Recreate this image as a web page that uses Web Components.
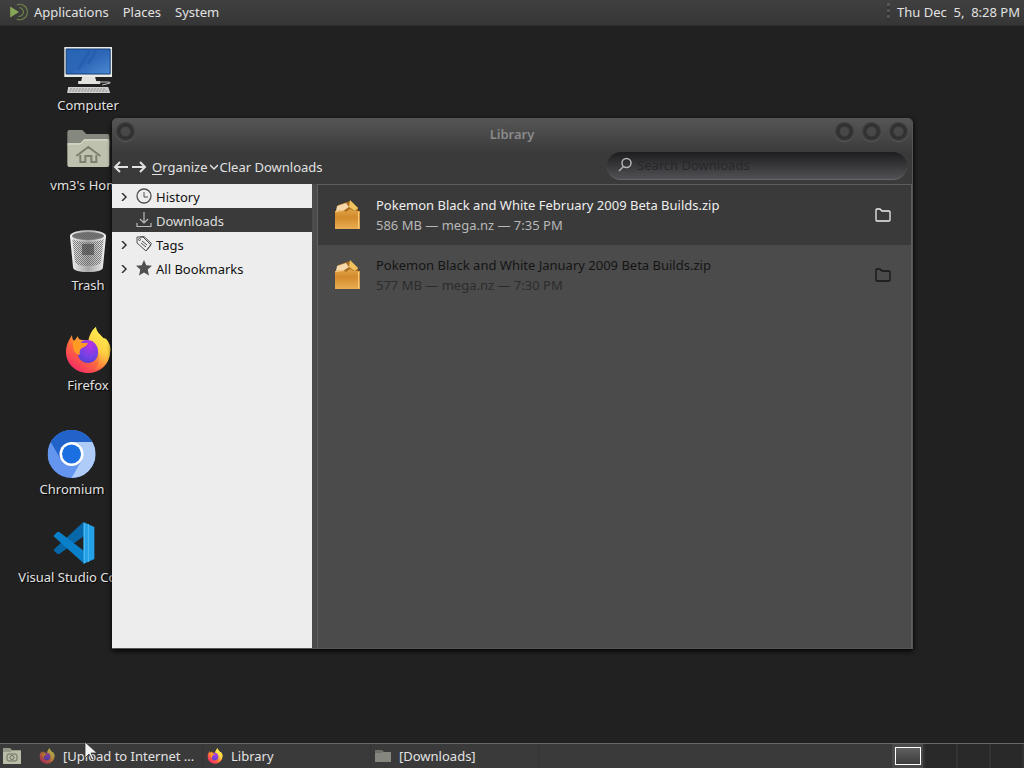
<!DOCTYPE html>
<html lang="en">
<head>
<meta charset="utf-8">
<title>Desktop</title>
<style>
  html, body { height: 100%; margin: 0; }
  body { overflow: hidden; background: #212121; color: #e2e2e2; font: 13px/18px "Noto Sans", "Open Sans", sans-serif; }
</style>
</head>
<body>
<mate-desktop></mate-desktop>

<script>
const ICONS = {
  mate: `<svg viewBox="0 0 20 20"><path d="M2 5l8 5-8 5z" fill="#87a556"/><path d="M8 3.500a7 7 0 1 1 0 13M10.500 6a4 4 0 1 1-1 8" fill="none" stroke="#6b7f4c" stroke-width="1.100"/></svg>`,
  computer: `<svg viewBox="0 0 48 48"><defs><linearGradient id="s" x1="0" y1="0" x2="1" y2="1"><stop offset="0" stop-color="#2565b4"/><stop offset=".5" stop-color="#2d66b6"/><stop offset="1" stop-color="#4b8ad2"/></linearGradient></defs>
    <path d="M0 1h48v30H0z" fill="#e8ebe6"/><path d="M2 3h44v25H2z" fill="url(#s)" stroke="#173d78"/><path d="M32 4L24 18M26 4L14 24" stroke="#1e50a0" stroke-width="3" opacity=".35"/><path d="M18 31h13l1 4h4v3H14v-3h3z" fill="#e2e3de"/><path d="M33 36h10q4 0 3 1l-8 2" stroke="#c7c8c5" fill="none"/><path d="M4 41h40l2 6H3z" fill="#d1d2cf"/><path d="M6 43h36M5 45h38" stroke="#888" stroke-dasharray="2 1"/></svg>`,
  home: `<svg viewBox="0 0 48 48"><path d="M3 4q0-2 2-2h13l4 4h21q2 0 2 2v10H3z" fill="#85887e" transform="translate(0 2)"/><path d="M3 17h13l4-4h23q2 0 2 2v24q0 2-2 2H5q-2 0-2-2z" fill="#bdc1ad"/><path d="M4 18h12l4-4h24" fill="none" stroke="#dde0d0"/><path d="M12 30l12-9 12 9M16 29v7h5v-6h6v6h5v-7" fill="none" stroke="#7c806c" stroke-width="2"/></svg>`,
  trash: `<svg viewBox="0 0 48 48"><defs><pattern id="m" width="2" height="2" patternUnits="userSpaceOnUse"><path d="M0 0h1v1H0zM1 1h1v1H1z" fill="#666"/></pattern><linearGradient id="t"><stop offset="0" stop-color="#f4f4f4"/><stop offset=".5" stop-color="#a6a6a6"/><stop offset="1" stop-color="#f4f4f4"/></linearGradient></defs>
    <path d="M6 10l3 31q0 5 15 5t15-5l3-31z" fill="url(#t)"/><path d="M8 11l3 25q1 4 13 4t13-4l3-25z" fill="url(#m)" opacity=".8"/><path d="M18 18h12v11H18z" fill="#333" opacity=".5"/><ellipse cx="24" cy="10" rx="18" ry="6" fill="url(#t)"/><ellipse cx="24" cy="10" rx="16" ry="4" fill="#777"/><path d="M9 9q15-5 30 0-15 8-30 0z" fill="url(#m)"/></svg>`,
  firefox: `<svg viewBox="0 0 48 48"><defs><linearGradient id="f" x1=".85" y1=".1" x2=".2" y2="1"><stop offset="0" stop-color="#fff14a"/><stop offset=".3" stop-color="#ffbd35"/><stop offset=".6" stop-color="#ff6a3c"/><stop offset="1" stop-color="#f0246c"/></linearGradient><linearGradient id="y" x1=".6" y1="0" x2=".3" y2="1"><stop offset="0" stop-color="#fff150"/><stop offset=".5" stop-color="#ffd244"/><stop offset="1" stop-color="#ff8a3c" stop-opacity=".2"/></linearGradient><radialGradient id="p" cx=".6" cy=".2" r=".9"><stop offset="0" stop-color="#b833e1"/><stop offset=".6" stop-color="#7542e5"/><stop offset="1" stop-color="#4d3ed2"/></radialGradient></defs>
    <path d="M8 9c0 3 1 5 2 6l4-5c0 3 2 4 5 4 2 0 4 0 6 1 1-7 4-12 7-14 0 5 4 7 7 11l3 1c4 5 5 9 4 14-1 12-10 20-22 20S2 38 2 26c0-7 3-12 6-17z" fill="url(#f)"/><path d="M24 17c1-8 4-13 8-16 0 5 4 7 7 11l3 1c4 5 5 9 4 14-1 10-8 16-16 17 5-4 6-12 4-18-2-5-5-7-10-9z" fill="url(#y)"/><path d="M17 16c6-4 15-2 17 8 1 8-4 13-10 13S13 32 14 26z" fill="url(#p)"/><path d="M9 15c4-1 7 0 9 2h6c-1 3-4 4-6 5-2 1-3 4-2 7-5-1-8-6-7-14z" fill="#ff9a23"/></svg>`,
  chromium: `<svg viewBox="0 0 48 48"><circle cx="24" cy="24" r="24" fill="#6596ef"/><path d="M3.200 12A24 24 0 0 1 44.800 12H24L13.600 30z" fill="#2263c9"/><path d="M44.800 12A24 24 0 0 1 24 48L34.400 30 24 12z" fill="#afccf9"/><circle cx="24" cy="24" r="12" fill="#fff"/><circle cx="24" cy="24" r="9.500" fill="#1b6fe0"/></svg>`,
  vscode: `<svg viewBox="0 0 48 48"><path d="M32 4L2 32l4 4h2l26-19z" fill="#0867a9"/><path d="M2 18l4-4h2l26 20-2 11z" fill="#0b80ca"/><path d="M32 4l11 5v32l-11 5z" fill="#22a0e8"/><path d="M33 5v40M37 6v38" stroke="#55baf0"/></svg>`,
  history: `<svg viewBox="0 0 16 16" fill="none" stroke="currentColor"><circle cx="8" cy="8" r="7" stroke-width="1.300"/><path d="M8 4v5h4"/></svg>`,
  download: `<svg viewBox="0 0 16 16" fill="none" stroke="currentColor" stroke-width="1.200"><path d="M8 0v10M4 7l4 4 4-4M1 11v3.500h14V11"/></svg>`,
  tags: `<svg viewBox="0 0 16 16" fill="none" stroke="currentColor"><path d="M1 1h6l8 8-5 6-9-8z"/><path d="M4 1l4-.5 7.500 7L11 14" /><circle cx="3.500" cy="3.500" r="1"/><path d="M6 5l5 4M5 7l5 4"/></svg>`,
  star: `<svg viewBox="0 0 16 16"><path d="M8 0l2.300 5.200 5.700.6-4.300 3.800 1.300 5.900L8 12.500l-5 3 1.300-5.900L0 5.800l5.700-.6z" fill="currentColor"/></svg>`,
  back: `<svg viewBox="0 0 16 16" fill="none" stroke="currentColor" stroke-width="2"><path d="M15 8H2M7 3L2 8l5 5"/></svg>`,
  forward: `<svg viewBox="0 0 16 16" fill="none" stroke="currentColor" stroke-width="2"><path d="M1 8h13M9 3l5 5-5 5"/></svg>`,
  down: `<svg viewBox="0 0 8 8" fill="none" stroke="currentColor" stroke-width="1.500"><path d="M0 2l4 4 4-4"/></svg>`,
  right: `<svg viewBox="0 0 8 8" fill="none" stroke="currentColor" stroke-width="1.500"><path d="M2 0l4 4-4 4"/></svg>`,
  search: `<svg viewBox="0 0 16 16" fill="none" stroke="currentColor" stroke-width="1.500"><circle cx="9.500" cy="6" r="4.500"/><path d="M6.500 9.500L2 14"/></svg>`,
  folder: `<svg viewBox="0 0 16 16" fill="none" stroke="currentColor" stroke-width="1.300"><path d="M1 13V3q0-1 1-1h3l2 2h7q1 0 1 1v8q0 1-1 1H2q-1 0-1-1z"/></svg>`,
  zip: `<svg viewBox="0 0 32 32"><defs><linearGradient id="z" x1="0" y1="0" x2="0" y2="1"><stop offset="0" stop-color="#e2a54a"/><stop offset=".4" stop-color="#d28a2c"/><stop offset="1" stop-color="#e9ae52"/></linearGradient></defs><path d="M6 6l12-4 8 7v5H5z" fill="#a96c20"/><path d="M5 7l9-3 3 4-6 4H4z" fill="#f6d7aa"/><path d="M18 1l8 8-3 3-6-4z" fill="#efc35d"/><path d="M3 12l8-1 3 2 4-3 4 2h6v18H3z" fill="url(#z)"/><path d="M3.500 12.500l8-1M26.500 13v16" stroke="#f8cd83"/></svg>`,
  smallfolder: `<svg viewBox="0 0 16 16"><path d="M0 2h7l2 2h7v10H0z" fill="#6f706a"/><path d="M0 5h6l2-1h8v10H0z" fill="#85867e"/></svg>`,
  files: `<svg viewBox="0 0 20 20"><path d="M1 2h7l2 2h9v4H1z" fill="#969987"/><path d="M1 6h7l2-1h9v13H1z" fill="#b9bda7"/><rect x="5" y="8" width="10" height="7" rx="2" fill="none" stroke="#6b6f5d"/><circle cx="10" cy="11.500" r="2" fill="none" stroke="#6b6f5d"/></svg>`,
  cursor: `<svg viewBox="0 0 14 20"><path d="M2 1v16l4-4 3 6 2-1-3-6h6z" fill="#f4f4f4" stroke="#333" stroke-width=".8"/></svg>`
};

function define(name, html, setup) {
  const template = document.createElement("template");
  template.innerHTML = html;
  customElements.define(name, class extends HTMLElement {
    constructor() {
      super();
      this.attachShadow({ mode: "open" }).append(template.content.cloneNode(true));
    }
    connectedCallback() { if (setup) setup(this, this.shadowRoot); }
  });
}

const RESET = `* { box-sizing: border-box; }
  button { font: inherit; color: inherit; background: none; border: 0; padding: 0; margin: 0; text-align: left; white-space: nowrap; }`;

define("app-icon", `<style>
  :host { display: block; flex: none; width: var(--size, 16px); height: var(--size, 16px); }
  span { display: contents; }
  svg { display: block; width: 100%; height: 100%; }
</style><span></span>`, (el, root) => { root.querySelector("span").innerHTML = ICONS[el.getAttribute("name")]; });

define("top-panel", `<style>${RESET}
  :host { display: flex; align-items: center; height: 26px; padding: 0 4px 2px 8px; background: linear-gradient(#404040, #363636); border-bottom: 1px solid #2a2a2a; box-sizing: border-box; }
  nav { display: flex; align-items: center; gap: 14px; flex: 1; }
  nav button:first-child { display: flex; align-items: center; gap: 4px; }
  app-icon { --size: 22px; }
  .grip { width: 3px; height: 18px; margin-right: 7px; background: repeating-linear-gradient(#555 0 3px, #333 3px 6px); }
</style>
<nav><button><app-icon name="mate"></app-icon>Applications</button><button>Places</button><button>System</button></nav>
<span class="grip"></span><button>Thu Dec&nbsp; 5,&nbsp; 8:28 PM</button>`);

define("desktop-icon", `<style>${RESET}
  :host { display: block; position: absolute; left: var(--x); top: var(--y); transform: translateX(-50%); }
  button { display: flex; flex-direction: column; align-items: center; gap: 2px; text-shadow: 1px 1px 1px #000; }
  app-icon { --size: 48px; }
</style>
<button><slot></slot></button>`, (el, root) => {
  const icon = document.createElement("app-icon");
  icon.setAttribute("name", el.getAttribute("icon"));
  root.querySelector("button").prepend(icon);
});

define("tree-item", `<style>${RESET}
  :host { display: block; color: #111; }
  :host([selected]) { background: #3a3a3a; color: #ddd; }
  button { display: flex; align-items: center; width: 100%; height: 24px; padding: 2px 8px 0; }
  .twist { --size: 8px; margin-right: 8px; color: #333; }
  :host([leaf]) .twist { visibility: hidden; }
  .kind { display: block; margin: -3px 4px 0 0; color: #505050; }
  :host([selected]) .kind { color: #bbb; }
</style>
<button><app-icon class="twist" name="right"></app-icon><slot name="icon" class="kind"></slot><slot></slot></button>`);

define("download-item", `<style>${RESET}
  :host { display: flex; align-items: center; height: 60px; padding: 0 20px 0 14px; box-sizing: border-box; color: #151515; }
  :host([selected]) { background: #3a3a3a; color: #eee; }
  .zip { --size: 32px; }
  .text { flex: 1; min-width: 0; margin-left: 12px; line-height: 20px; white-space: nowrap; }
  .meta { color: #2c2c2c; }
  :host([selected]) .meta { color: #b8b8b8; }
</style>
<app-icon class="zip" name="zip"></app-icon>
<div class="text"><div><slot></slot></div><div class="meta"><slot name="meta"></slot></div></div>
<button aria-label="Open containing folder"><app-icon name="folder"></app-icon></button>`);

define("window-button", `<style>
  :host { display: block; width: 19px; height: 19px; }
  button { display: block; box-sizing: border-box; width: 19px; height: 19px; padding: 0; border: 0; border-radius: 50%; background: radial-gradient(circle, #484848 4px, #2e2e2e 6px, #363636 8px, #444 10px); box-shadow: 0 1px 1px #5c5c5c; }
</style><button></button>`, (el, root) => root.querySelector("button").setAttribute("aria-label", el.getAttribute("label")));

define("library-window", `<style>${RESET}
  :host { display: flex; flex-direction: column; box-sizing: border-box; border: 1px solid #555; border-left: 0; border-radius: 5px 5px 0 0; background: #4b4b4b; box-shadow: 0 2px 5px #000; overflow: hidden; }
  header { background: linear-gradient(#555, #3a3a3a 34px); flex: none; }
  .title { display: grid; grid-template-columns: 1fr auto 1fr; align-items: center; height: 30px; padding: 0 4px; }
  h1 { margin: 0; font: 600 13px/18px "Noto Sans", sans-serif; color: #8a8a8a; }
  .controls { display: flex; gap: 8px; justify-self: end; }
  .title window-button { margin-top: -5px; }
  .tools { display: flex; align-items: center; height: 35px; padding: 0 5px 0 1px; }
  .tools button { display: flex; align-items: center; gap: 2px; }
  .tools .nav { margin-right: 2px; }
  .clear { margin-left: 2px; }
  u { text-underline-offset: 2px; }
  .menu { margin-left: 3px; }
  .menu app-icon { --size: 8px; }
  .search { display: flex; align-items: center; gap: 4px; width: 300px; height: 28px; margin: -2px 0 0 auto; padding: 0 10px; border-radius: 14px; background: linear-gradient(#1d1d1f, #515155); border-bottom: 1px solid #666; color: #b5b5b5; }
  input { flex: 1; min-width: 0; padding: 0; border: 0; outline: 0; background: none; font: inherit; color: #ddd; }
  input::placeholder { color: #27272b; opacity: 1; }
  .body { display: flex; flex: 1; min-height: 0; }
  aside { width: 200px; background: #ededed; }
  main { flex: 1; min-width: 0; margin-left: 5px; border: 1px solid #5e5e5e; border-width: 1px 1px 0; }
</style>
<header>
  <div class="title"><window-button label="Window menu"></window-button><h1>Library</h1>
    <div class="controls"><window-button label="Minimize"></window-button><window-button label="Maximize"></window-button><window-button label="Close"></window-button></div></div>
  <div class="tools">
    <button class="nav" aria-label="Back"><app-icon name="back"></app-icon></button>
    <button class="nav" aria-label="Forward"><app-icon name="forward"></app-icon></button>
    <button class="menu"><span><u>O</u>rganize</span><app-icon name="down"></app-icon></button>
    <button class="clear">Clear Downloads</button>
    <label class="search"><app-icon name="search"></app-icon><input type="text" placeholder="Search Downloads" aria-label="Search Downloads"></label>
  </div>
</header>
<div class="body"><aside><slot name="tree"></slot></aside><main><slot></slot></main></div>`);

define("task-button", `<style>${RESET}
  :host { display: block; flex: 0 0 168px; height: 24px; border-right: 1px solid #353535; box-sizing: border-box; }
  button { display: flex; align-items: center; gap: 8px; width: 100%; height: 24px; padding: 0 4px; }
  .icon { display: block; }
  :host([minimized]) .icon { opacity: .6; }
  .label { overflow: hidden; text-overflow: ellipsis; }
</style><button><slot name="icon" class="icon"></slot><span class="label"><slot></slot></span></button>`);

define("bottom-panel", `<style>${RESET}
  :host { display: flex; align-items: center; height: 25px; box-sizing: border-box; border-top: 1px solid #666; background: #3a3a3a; }
  .show { padding: 0 0 0 2px; margin-right: 13px; }
  .show app-icon { --size: 20px; }
  .tasks { display: flex; flex: 1; min-width: 0; }
  .pager { display: flex; height: 24px; }
  .pager button { width: 33px; background: #292929; border-right: 2px solid #333; }
  .pager button:first-child { background: #4a4a4a; padding: 3px 4px 3px 3px; }
  .pager i { display: block; height: 18px; width: 26px; border: 1px solid #fff; background: linear-gradient(#606060, #3c3c3c); }
</style>
<button class="show" aria-label="Files"><app-icon name="files"></app-icon></button>
<div class="tasks">
  <task-button minimized><app-icon slot="icon" name="firefox"></app-icon>[Upload to Internet ...</task-button>
  <task-button><app-icon slot="icon" name="firefox"></app-icon>Library</task-button>
  <task-button><app-icon slot="icon" name="smallfolder"></app-icon>[Downloads]</task-button>
</div>
<div class="pager"><button aria-label="Workspace 1"><i></i></button><button aria-label="Workspace 2"></button><button aria-label="Workspace 3"></button><button aria-label="Workspace 4"></button></div>`);

define("mate-desktop", `<style>
  :host { display: flex; flex-direction: column; height: 100vh; position: relative; }
  .canvas { flex: 1; position: relative; min-height: 0; overflow: hidden; }
  library-window { position: absolute; left: 112px; top: 92px; right: 111px; bottom: 94px; }
  .cursor { position: absolute; left: 80px; bottom: 7px; --size: 20px; pointer-events: none; }
</style>
<top-panel></top-panel>
<div class="canvas">
  <desktop-icon icon="computer" style="--x:88px;--y:20px">Computer</desktop-icon>
  <desktop-icon icon="home" style="--x:88px;--y:100px">vm3's Home</desktop-icon>
  <desktop-icon icon="trash" style="--x:88px;--y:200px">Trash</desktop-icon>
  <desktop-icon icon="firefox" style="--x:88px;--y:300px">Firefox</desktop-icon>
  <desktop-icon icon="chromium" style="--x:72px;--y:404px">Chromium</desktop-icon>
  <desktop-icon icon="vscode" style="--x:75px;--y:492px">Visual Studio Code</desktop-icon>
  <library-window>
    <tree-item slot="tree"><app-icon slot="icon" name="history"></app-icon>History</tree-item>
    <tree-item slot="tree" selected leaf><app-icon slot="icon" name="download"></app-icon>Downloads</tree-item>
    <tree-item slot="tree"><app-icon slot="icon" name="tags"></app-icon>Tags</tree-item>
    <tree-item slot="tree"><app-icon slot="icon" name="star"></app-icon>All Bookmarks</tree-item>
    <download-item selected>Pokemon Black and White February 2009 Beta Builds.zip<span slot="meta">586 MB — mega.nz — 7:35 PM</span></download-item>
    <download-item>Pokemon Black and White January 2009 Beta Builds.zip<span slot="meta">577 MB — mega.nz — 7:30 PM</span></download-item>
  </library-window>
</div>
<bottom-panel></bottom-panel>
<app-icon class="cursor" name="cursor"></app-icon>`);
</script>
</body>
</html>
